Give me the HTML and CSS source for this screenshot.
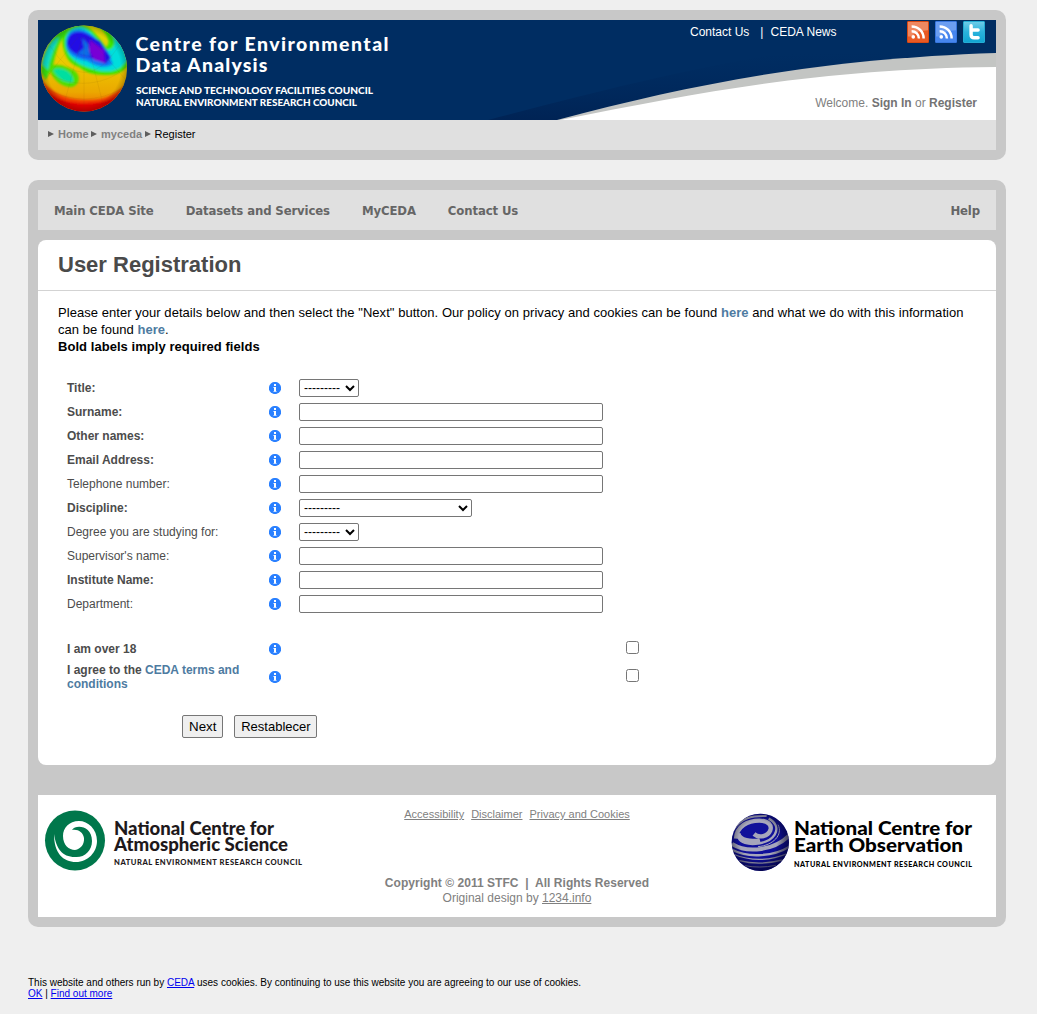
FILE: index.html
```html
<!DOCTYPE html>
<html lang="en">
<head>
<meta charset="utf-8">
<title>User Registration</title>
<link rel="stylesheet" href="styles.css">
</head>
<body>
<svg class="defs" width="0" height="0" aria-hidden="true">
  <symbol id="info" viewBox="0 0 12 12"><circle cx="6" cy="6" r="6.1" fill="#2a80ff"/><path d="M5 2h2v2H5zM4.500 5H7v4H5V6h-.5zM4.500 9h3v.8h-3z" fill="#fff"/></symbol>
  <symbol id="feed" viewBox="0 0 22 22"><circle cx="5.800" cy="16.400" r="2" fill="#fff"/><path d="M4 10.200c4.600 0 8 3.400 8 8M4 5c7.500 0 13.200 5.700 13.200 13.200" fill="none" stroke="#fff" stroke-width="2.700"/></symbol>
</svg>
<header class="box">
  <div class="banner">
    <svg class="banner-bg" viewBox="0 0 958 100" aria-hidden="true">
      <defs>
        <linearGradient id="navy" x1="0" y1="0" x2=".1" y2="1"><stop offset=".3" stop-color="#00265a" stop-opacity="0"/><stop offset="1" stop-color="#002050" stop-opacity=".75"/></linearGradient>
        <clipPath id="ball"><circle cx="46" cy="48.500" r="43"/></clipPath>
        <filter id="soft" x="-20%" y="-20%" width="140%" height="140%"><feGaussianBlur stdDeviation="1"/></filter>
        <radialGradient id="shade" cx=".5" cy=".5" r=".5"><stop offset=".85" stop-color="#000" stop-opacity="0"/><stop offset="1" stop-color="#000" stop-opacity=".22"/></radialGradient>
        <linearGradient id="warm" x1="0" y1="0" x2="0" y2="1"><stop offset="0" stop-color="#d8dc00"/><stop offset=".45" stop-color="#ecc800"/><stop offset=".72" stop-color="#eba800"/><stop offset=".84" stop-color="#ee7a00"/></linearGradient>
      </defs>
      <path d="M0 0H958V100H0z" fill="#002d62"/>
      <path d="M519 100C655 64 780 39 958 33V12C780 18 640 50 450 100z" fill="url(#navy)"/>
      <path d="M519 100C655 64 780 39 958 33V100z" fill="#c3c5c3"/>
      <path d="M522 100C670 71 780 49 958 47V100z" fill="#fff"/>
      <g clip-path="url(#ball)">
        <path d="M0 0H92V100H0z" fill="url(#warm)"/>
        <g filter="url(#soft)">
          <path d="M0 56C12 71 24 79 46 80S78 75 94 58V100H0z" fill="#f03c00"/>
          <path d="M0 62C14 77 26 83 46 83S76 80 94 64V100H0z" fill="#e00600"/>
          <path d="M3 52C5 30 14 14 28 8L31 12C21 19 18 32 15 45L8 60z" fill="#38df10"/>
          <path d="M4 44C7 28 14 20 21 17C16 29 12 38 10 50z" fill="#10d9c5"/>
          <path d="M25 26C23 11 32 5 44 5C55 8 60 17 68 27C74 23 69 12 58 5C76 4 92 22 92 40C89 51 80 55 68 55C54 55 47 52 41 47C31 44 27 36 25 26z" fill="#3ce500"/>
          <path d="M28 26C26 12 34 7 44 7C54 10 58 20 67 30C80 31 78 18 72 12C86 20 91 32 89 40C82 51 74 52 63 51C49 48 30 42 28 26z" fill="#00dedb"/>
          <path d="M28 24C28 11 37 8 45 10C57 14 61 24 69 31L75 44C66 50 56 45 49 41C36 39 28 33 28 24z" fill="#087cf5"/>
          <path d="M29 23C30 12 39 10 47 13L62 21L73 37L68 44L52 38C38 36 30 31 29 23z" fill="#2109e5"/>
          <path d="M44 18L50 24L52 37L39 34L46 28z" fill="#086de6"/>
          <path d="M52 20L66 30L67 43L56 40L51 30z" fill="#7800d5"/>
          <path d="M11 47C17 42 28 46 37 51C45 59 39 68 31 67C22 66 13 58 11 47z" fill="#50df00"/>
          <path d="M15 50C24 45 37 54 35 62C26 63 19 58 15 50z" fill="#00dfa0"/>
        </g>
        <path d="M44 17L24 92M46 17V92M48 17L67 92M3 46C22 68 65 70 89 46M7 68Q46 90 85 68M50 17L88 60M40 17L5 62M12 26Q46 79 81 26" fill="none" stroke="#705000" stroke-opacity=".22" stroke-width=".4"/>
        <circle cx="46" cy="48.500" r="43" fill="url(#shade)"/>
      </g>
      <g class="logo-type" fill="#fff">
        <text x="97.500" y="31" font-size="19.500" textLength="253">Centre for Environmental</text>
        <text x="97.500" y="51.500" font-size="19.500" textLength="132">Data Analysis</text>
        <text x="98" y="73.500" font-size="9.500" textLength="237" lengthAdjust="spacingAndGlyphs">SCIENCE AND TECHNOLOGY FACILITIES COUNCIL</text>
        <text x="98" y="85.500" font-size="9.500" textLength="221" lengthAdjust="spacingAndGlyphs">NATURAL ENVIRONMENT RESEARCH COUNCIL</text>
      </g>
    </svg>
    <div class="banner-top">
      <div class="quick"><a>Contact Us</a><span>|</span><a>CEDA News</a></div>
      <div class="social">
        <svg class="orange" viewBox="0 0 22 22"><path d="M0 0H22V9Q10 9 4 16H0z" fill="#fff" opacity=".28"/><use href="#feed"/></svg>
        <svg class="blue" viewBox="0 0 22 22"><path d="M0 0H22V9Q10 9 4 16H0z" fill="#fff" opacity=".2"/><use href="#feed"/></svg>
        <svg class="cyan" viewBox="0 0 22 22"><path d="M7.800 4v10q0 3.300 3.400 3.300h4.300M8 8.800h7.500" fill="none" stroke="#fff" stroke-width="3.800" stroke-linecap="round"/></svg>
      </div>
    </div>
    <p class="welcome">Welcome. <b>Sign In</b> or <b>Register</b></p>
  </div>
  <nav class="crumbs"><i></i><b>Home</b><i></i><b>myceda</b><i></i><span>Register</span></nav>
</header>

<main class="box main">
  <nav class="menu"><a>Main CEDA Site</a><a>Datasets and Services</a><a>MyCEDA</a><a>Contact Us</a><a class="help">Help</a></nav>
  <section class="panel">
    <h1>User Registration</h1>
    <div class="intro">Please enter your details below and then select the "Next" button. Our policy on privacy and cookies can be found <a>here</a> and what we do with this information<br>can be found <a>here</a>.<br><b>Bold labels imply required fields</b></div>
    <form>
      <div class="row"><label class="req">Title:</label><svg><use href="#info"/></svg><select class="short"><option>---------</option></select></div>
      <div class="row"><label class="req">Surname:</label><svg><use href="#info"/></svg><input type="text"></div>
      <div class="row"><label class="req">Other names:</label><svg><use href="#info"/></svg><input type="text"></div>
      <div class="row"><label class="req">Email Address:</label><svg><use href="#info"/></svg><input type="text"></div>
      <div class="row"><label>Telephone number:</label><svg><use href="#info"/></svg><input type="text"></div>
      <div class="row"><label class="req">Discipline:</label><svg><use href="#info"/></svg><select class="long"><option>---------</option></select></div>
      <div class="row"><label>Degree you are studying for:</label><svg><use href="#info"/></svg><select class="short"><option>---------</option></select></div>
      <div class="row"><label>Supervisor's name:</label><svg><use href="#info"/></svg><input type="text"></div>
      <div class="row"><label class="req">Institute Name:</label><svg><use href="#info"/></svg><input type="text"></div>
      <div class="row"><label>Department:</label><svg><use href="#info"/></svg><input type="text"></div>
      <div class="row check first"><label class="req">I am over 18</label><svg><use href="#info"/></svg><input type="checkbox"></div>
      <div class="row check agree"><label class="req">I agree to the <a>CEDA terms and<br>conditions</a></label><svg><use href="#info"/></svg><input type="checkbox"></div>
      <div class="actions"><button type="button">Next</button><button type="button" class="reset">Restablecer</button></div>
    </form>
  </section>
  <footer>
    <svg class="ncas" viewBox="0 0 300 122">
      <circle cx="37" cy="45.500" r="30" fill="#00774b"/>
      <path d="M16 39C16 58 25 67 38 67C50 67 59 57 59 46C59 34 50 26 41 26C31 26 25 33 25 41C25 50 31 55 37 55C43 54 46.500 49 46 43C45 37 40 34 34 35C38 29 54 31 54 46C54 56 46 63 37 62C24 62 18 53 16 39z" fill="#fff"/>
      <g class="logo-type" fill="#1e191b">
        <text x="76" y="39.500" font-size="19" textLength="160" lengthAdjust="spacingAndGlyphs">National Centre for</text>
        <text x="76" y="55.500" font-size="19" textLength="174" lengthAdjust="spacingAndGlyphs">Atmospheric Science</text>
        <text x="76" y="69.500" font-size="7.600" textLength="188" lengthAdjust="spacing">NATURAL ENVIRONMENT RESEARCH COUNCIL</text>
      </g>
    </svg>
    <div class="foot-mid">
      <div class="foot-links"><a>Accessibility</a><a>Disclaimer</a><a>Privacy and Cookies</a></div>
      <div class="copy"><b>Copyright © 2011 STFC &nbsp;|&nbsp; All Rights Reserved</b><br>Original design by <a>1234.info</a></div>
    </div>
    <svg class="nceo" viewBox="0 0 300 122">
      <defs>
        <clipPath id="orb"><circle cx="97" cy="103" r="86"/></clipPath>
        <radialGradient id="orbshade" cx=".46" cy=".45" r=".55"><stop offset=".6" stop-color="#000" stop-opacity="0"/><stop offset="1" stop-color="#000030" stop-opacity=".7"/></radialGradient>
      </defs>
      <g transform="translate(32 13) scale(.3333)" clip-path="url(#orb)">
        <path d="M0 0H200V200H0z" fill="#10109a"/>
        <g fill="none" stroke="#a6a6bb">
          <path d="M16 66C40 30 70 22 116 24" stroke-width="6"/>
          <path d="M24 92C26 54 60 38 94 38C122 38 132 52 127 67C120 84 94 92 78 78" stroke-width="13"/>
          <path d="M32 90C44 118 120 112 140 80C152 60 142 42 122 32" stroke-width="7"/>
          <path d="M30 76C34 98 70 104 96 97" stroke-width="15"/>
          <path d="M12 108C60 138 140 126 184 82" stroke-width="12"/>
          <path d="M150 50C166 80 136 112 90 116" stroke-width="3"/>
          <path d="M14 126C60 151 140 145 184 116" stroke-width="7"/>
          <path d="M14 138C70 161 130 157 180 136" stroke-width="4"/>
          <path d="M34 158Q94 174 164 156" stroke-width="4"/>
          <path d="M50 173Q94 182 144 172" stroke-width="3"/>
        </g>
        <circle cx="97" cy="103" r="87" fill="url(#orbshade)"/>
      </g>
      <g class="logo-type" fill="#000">
        <text x="98" y="39.500" font-size="19.500" textLength="178" lengthAdjust="spacingAndGlyphs">National Centre for</text>
        <text x="98" y="57" font-size="19.500" textLength="169" lengthAdjust="spacingAndGlyphs">Earth Observation</text>
        <text x="98" y="71.500" font-size="7.200" textLength="178" lengthAdjust="spacing">NATURAL ENVIRONMENT RESEARCH COUNCIL</text>
      </g>
    </svg>
  </footer>
</main>
<div class="cookies">This website and others run by <a>CEDA</a> uses cookies. By continuing to use this website you are agreeing to our use of cookies.<br><a>OK</a> | <a>Find out more</a></div>
</body>
</html>
```
FILE: styles.css
```css
* { box-sizing: border-box; }
body { margin: 0; padding: 10px 31px 0 28px; height: 1014px; overflow: hidden; background: #efefef; font-family: "Liberation Sans", Arial, sans-serif; font-size: 12px; color: #000; }
.defs { position: absolute; }
.box { background: #c8c8c8; border-radius: 10px; padding: 10px; width: 978px; }
header.box { height: 150px; }
.main { margin-top: 20px; height: 747px; }
.banner { position: relative; height: 100px; }
.banner-bg { position: absolute; inset: 0; width: 958px; height: 100px; }
.logo-type { font-family: Lato, sans-serif; font-weight: 900; }
.banner-top { position: relative; display: flex; justify-content: flex-end; padding-right: 11px; height: 75px; }
.quick { display: flex; color: #fff; padding-top: 5px; line-height: 14px; margin-right: 70.500px; }
.quick span { margin: 0 7px 0 11px; }
.social { display: flex; gap: 6px; padding-top: 1px; }
.social svg { width: 22px; height: 22px; border-radius: 1px; }
.orange { background: #e95a24; border: 1px solid #d94913; }
.blue { background: #4686ee; border: 1px solid #3877e0; }
.cyan { background: linear-gradient(#6dcbe8, #2ab2dc 50%, #12a5d2); border: 1px solid #24acd4; }
.welcome { position: relative; margin: 0; padding-right: 19px; text-align: right; color: #808080; line-height: 14px; padding-top: 1px; }
.welcome b { color: #737373; }
.crumbs { height: 30px; background: #e0e0e0; display: flex; align-items: center; padding-left: 10px; padding-bottom: 2px; font-size: 11px; color: #000; }
.crumbs i { border-left: 6px solid #5e5e5e; border-top: 3.5px solid transparent; border-bottom: 3.5px solid transparent; margin-right: 4px; }
.crumbs b { color: #808080; margin-right: 2.5px; }
.menu { height: 40px; background: #e0e0e0; display: flex; align-items: center; gap: 32px; padding: 1px 16px 0; font: bold 13px/16px "DejaVu Sans Condensed", "DejaVu Sans", sans-serif; font-stretch: condensed; letter-spacing: -.12px; color: #666; }
.help { margin-left: auto; }
.panel { background: #fff; border-radius: 8px; margin-top: 10px; height: 525px; }
h1 { margin: 0; height: 51px; border-bottom: 1px solid #d3d3d3; padding: 11px 20px 0; font-size: 22px; line-height: 28px; color: #4a4a4a; }
.intro { padding: 13px 0 0 20px; font-size: 13px; line-height: 17px; letter-spacing: .048px; white-space: nowrap; }
.intro a, label a { color: #4e7ba1; font-weight: bold; }
form { padding: 21px 0 0 29px; }
.row { display: grid; grid-template-columns: 202px 30px 306px; height: 24px; align-items: center; }
.row label { color: #4c4c4c; line-height: 14px; }
.row .req { font-weight: bold; }
.row svg { width: 12px; height: 12px; }
.row input[type=text] { width: 304px; height: 18px; border: 1px solid #767676; border-radius: 2px; }
select { height: 18px; font: 12px "Liberation Sans", Arial, sans-serif; padding: 0; border: 1px solid #767676; border-radius: 2px; background-color: #fff; color: #000; }
.short { width: 60px; }
.long { width: 173px; }
.check { grid-template-columns: 202px 30px 327px 13px; }
.row.check input { grid-column: 4; margin: 0 0 3px; width: 13px; height: 13px; }
.first { margin-top: 21px; }
.agree { height: 32px; }
.actions { display: flex; gap: 11px; padding: 22px 0 0 115px; }
button { height: 23px; padding: 0 6px; border: 1px solid #767676; border-radius: 2px; background: #efefef; color: #000; font: 13.333px "Liberation Sans", Arial, sans-serif; }
.reset { width: 83px; padding: 0; font-size: 13px; }
footer { background: #fff; margin-top: 30px; height: 122px; display: flex; justify-content: space-between; color: #808080; }
footer svg { width: 300px; height: 122px; }
.foot-mid { width: 300px; text-align: center; }
.foot-links { display: flex; justify-content: center; gap: 7px; padding-top: 13px; font-size: 11px; line-height: 13px; }
.foot-links a, .copy a { text-decoration: underline; }
.copy { padding-top: 55px; line-height: 15px; }
.copy b { letter-spacing: .04px; }
.cookies { margin-top: 50px; font-size: 10px; line-height: 11px; }
.cookies a { color: #00e; text-decoration: underline; }
```
